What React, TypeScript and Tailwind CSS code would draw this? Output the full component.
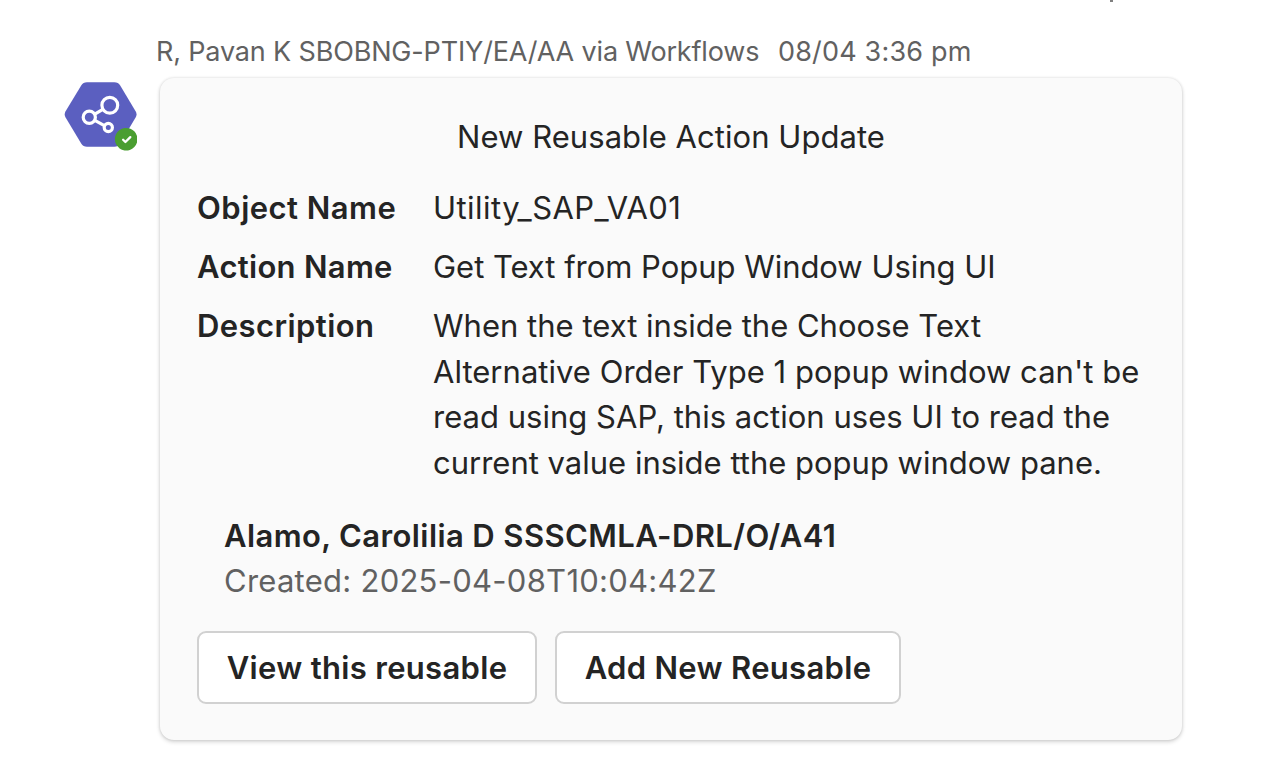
function WorkflowsAvatar() {
  return (
    <svg width="74" height="70" viewBox="64 82 74 70" fill="none" aria-hidden="true">
      <path
        d="M87 82.2H114.4Q118.2 82.2 120.2 85.4L135.6 111.2Q137.5 114.4 135.6 117.6L120.2 143.4Q118.2 146.7 114.4 146.7H87Q83.2 146.7 81.2 143.4L65.6 117.6Q63.8 114.4 65.6 111.2L81.2 85.4Q83.2 82.2 87 82.2Z"
        fill="#5b5fc0"
      />
      <g stroke="#ffffff" strokeWidth="3.2">
        <circle cx="109.8" cy="105.3" r="7.9" />
        <circle cx="89.3" cy="117.3" r="6.1" />
        <circle cx="108.3" cy="127.5" r="4.1" />
        <path d="M94.8 114.2L102.8 109.4M94.8 120.4L104.4 125.6" />
      </g>
      <path d="M137 135.9A11.3 11.3 0 1 0 137 142.5Z" fill="#4a9e31" />
      <path
        d="M123.1 139.7L125.4 142L130.3 137.1"
        stroke="#ffffff"
        strokeWidth="2.3"
        strokeLinecap="round"
        strokeLinejoin="round"
      />
    </svg>
  );
}

export default function App() {
  return (
    <main className="relative h-[780px] w-[1264px] overflow-hidden bg-white font-['Inter','Liberation_Sans',sans-serif] text-[31px] leading-[45.6px] text-[#242424]">
      <span className="absolute left-[1110px] top-0 h-[2px] w-[3px] bg-[#808080]" />

      <header className="flex h-[78px] items-start whitespace-nowrap pl-[156px] pt-[32px] text-[27px] leading-[39px] text-[#616161]">
        <span className="w-[622px] tracking-[-0.16px]">R, Pavan K SBOBNG-PTIY/EA/AA via Workflows</span>
        <time className="tracking-[0.18px]">08/04 3:36 pm</time>
      </header>

      <div className="flex items-start">
        <div className="ml-[64px] mt-[4px] w-[96px] shrink-0">
          <WorkflowsAvatar />
        </div>

        <article className="h-[662px] w-[1022px] rounded-[14px] bg-[#fafafa] px-[37px] pt-[36px] shadow-[0_2px_4px_rgba(0,0,0,0.16),0_0_3px_rgba(0,0,0,0.13)]">
          <h1 className="text-center tracking-[0.05px]">New Reusable Action Update</h1>

          <dl className="mt-[25.4px] grid grid-cols-[236px_auto] gap-y-[13.4px] whitespace-nowrap">
            <dt className="font-semibold tracking-[0.48px]">Object Name</dt>
            <dd className="tracking-[0.45px]">Utility_SAP_VA01</dd>
            <dt className="font-semibold tracking-[0.3px]">Action Name</dt>
            <dd className="tracking-[-0.03px]">Get Text from Popup Window Using UI</dd>
            <dt className="font-semibold tracking-[0.42px]">Description</dt>
            <dd>
              <span className="block tracking-[0.015px]">When the text inside the Choose Text</span>
              <span className="block tracking-[0.025px]">Alternative Order Type 1 popup window can't be</span>
              <span className="block tracking-[0.02px]">read using SAP, this action uses UI to read the</span>
              <span className="block">current value inside tthe popup window pane.</span>
            </dd>
          </dl>

          <div className="mt-[27.2px] whitespace-nowrap pl-[27px]">
            <p className="font-semibold tracking-[0.4px]">Alamo, Carolilia D SSSCMLA-DRL/O/A41</p>
            <p className="tracking-[0.26px] text-[#616161]">Created: 2025-04-08T10:04:42Z</p>
          </div>

          <div className="mt-[27.2px] flex gap-[18px] whitespace-nowrap font-semibold tracking-[0.32px]">
            <button className="h-[73px] w-[340px] rounded-[9px] border-2 border-[#d1d1d1] bg-white">
              View this reusable
            </button>
            <button className="h-[73px] w-[346px] rounded-[9px] border-2 border-[#d1d1d1] bg-white">
              Add New Reusable
            </button>
          </div>
        </article>
      </div>
    </main>
  );
}
